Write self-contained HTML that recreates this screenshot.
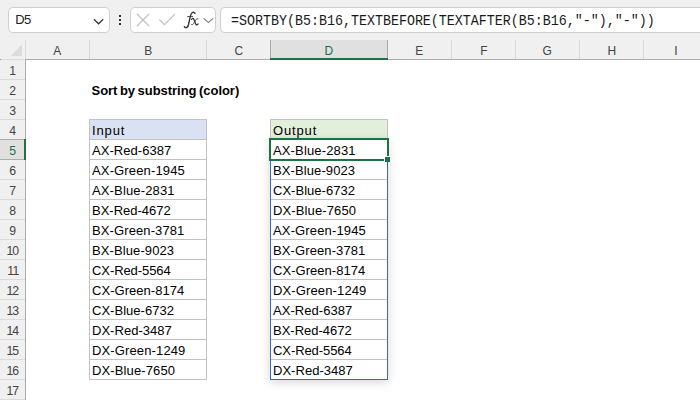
<!DOCTYPE html>
<html><head><meta charset="utf-8">
<style>
*{box-sizing:border-box;margin:0;padding:0}
html,body{width:700px;height:400px;overflow:hidden;background:#f0f0f0;font-family:"Liberation Sans",sans-serif;}
.abs{position:absolute}
.box{position:absolute;top:7px;height:26px;background:#fff;border:1px solid #cecece;border-radius:4.5px}
#sheet{position:absolute;left:26px;top:60px;width:674px;height:340px;background:#fff}
.ch{position:absolute;top:40px;height:19px;font-size:13px;line-height:21px;text-align:center;color:#444;border-right:1px solid #d8d8d8}
.rh{position:absolute;left:0;width:25px;height:20px;font-size:13px;line-height:21px;text-align:center;color:#444;border-bottom:1px solid #dadada}
.cell{position:absolute;height:20px;font-size:13px;line-height:22px;color:#000;white-space:nowrap}
.sq{display:inline-block;transform:scaleX(0.94)}
.hl{position:absolute;height:1px;background:#c2c2c2}
.vl{position:absolute;width:1px;background:#c2c2c2}
</style></head><body>
<!-- formula bar -->
<div class="box" style="left:8px;width:102px"></div>
<div class="abs" style="left:15.3px;top:12.3px;font-size:13px;letter-spacing:-0.6px;line-height:16px;color:#222">D5</div>
<svg class="abs" style="left:92px;top:16px" width="14" height="10" viewBox="0 0 14 10"><path d="M1.9 3.2 L6.55 7.8 L11.2 3.2" fill="none" stroke="#333" stroke-width="1.2"/></svg>
<div class="abs" style="left:119px;top:15px;width:2px;height:2px;background:#333"></div>
<div class="abs" style="left:119px;top:19px;width:2px;height:2px;background:#333"></div>
<div class="abs" style="left:119px;top:23px;width:2px;height:2px;background:#333"></div>
<div class="box" style="left:130px;width:86px"></div>
<svg class="abs" style="left:130px;top:7px" width="86" height="26" viewBox="0 0 86 26">
<path d="M7 7 L19 19 M19 7 L7 19" stroke="#c0c0c0" stroke-width="1.2" fill="none"/>
<path d="M29.2 12.4 L34.4 17.6 L44.9 7.1" stroke="#c0c0c0" stroke-width="1.2" fill="none"/>
<path d="M73.7 11.3 L78.4 15.6 L83.1 11.3" stroke="#777" stroke-width="1.1" fill="none"/>
</svg>
<svg class="abs" style="left:178px;top:6px" width="40" height="28" viewBox="178 6 40 28">
<path d="M194.9 13.3 C194.7 12.3 193.2 11.9 192.1 12.7 C191 13.5 190.6 15 190.2 16.8 L188.4 25 C188 26.7 187 27.7 185.7 27.6 C184.9 27.5 184.6 27.2 184.4 26.7" fill="none" stroke="#333" stroke-width="1.4" stroke-linecap="round"/>
<path d="M187.2 16.6 L193.1 16.6" fill="none" stroke="#333" stroke-width="0.9"/>
<path d="M191.6 19.4 C192.3 18.3 193.4 18.1 193.9 19.4 L195.7 24 C196.2 25.2 197.3 25.1 198.1 23.9" fill="none" stroke="#333" stroke-width="1.25" stroke-linecap="round"/>
<path d="M198.2 19 C197.4 18.3 196.5 18.8 195.8 19.9 L193.5 23.6 C192.9 24.6 192.2 25 191.6 24.6" fill="none" stroke="#333" stroke-width="0.85" stroke-linecap="round"/>
</svg>
<div class="box" style="left:220px;width:500px"></div>
<div class="abs" style="left:231px;top:12px;font-family:'Liberation Mono',monospace;font-size:14.4px;transform:scaleX(0.92577);transform-origin:0 0;line-height:18px;color:#1a1a1a;white-space:pre">=SORTBY(B5:B16,TEXTBEFORE(TEXTAFTER(B5:B16,"-"),"-"))</div>

<!-- headers -->
<div class="abs" style="left:0;top:59px;width:25px;height:1px;background:#dcdcdc"></div>
<div class="abs" style="left:0;top:59px;width:1px;height:1px;background:#999"></div>
<div class="abs" style="left:26px;top:59px;width:674px;height:1px;background:#ababab"></div>
<div class="abs" style="left:25px;top:40px;width:1px;height:20px;background:#dcdcdc"></div>
<div class="abs" style="left:25px;top:59px;width:1px;height:341px;background:#ababab"></div>
<svg class="abs" style="left:9px;top:44px" width="14" height="13" viewBox="0 0 14 13"><path d="M13 0.5 L13 12 L1.5 12 Z" fill="#dcdcdc"/></svg>
<div class="ch" style="left:26px;width:64px"><span class="sq" style="transform:scaleX(0.92)">A</span></div>
<div class="ch" style="left:90px;width:117px"><span class="sq" style="transform:scaleX(0.92)">B</span></div>
<div class="ch" style="left:207px;width:64px"><span class="sq" style="transform:scaleX(0.92)">C</span></div>
<div class="ch" style="left:270px;width:118px;background:#e0e0e0;color:#1f6e43;border-left:1px solid #ababab;border-right:1px solid #ababab"><span class="sq" style="transform:scaleX(0.92)">D</span></div>
<div class="abs" style="left:270px;top:58px;width:118px;height:2px;background:#1e7145"></div>
<div class="ch" style="left:388px;width:64px"><span class="sq" style="transform:scaleX(0.92)">E</span></div>
<div class="ch" style="left:452px;width:64px"><span class="sq" style="transform:scaleX(0.92)">F</span></div>
<div class="ch" style="left:516px;width:64px"><span class="sq" style="transform:scaleX(0.92)">G</span></div>
<div class="ch" style="left:580px;width:64px"><span class="sq" style="transform:scaleX(0.92)">H</span></div>
<div class="ch" style="left:644px;width:64px"><span class="sq" style="transform:scaleX(0.92)">I</span></div>

<div class="rh" style="top:60px"><span class="sq">1</span></div>
<div class="rh" style="top:80px"><span class="sq">2</span></div>
<div class="rh" style="top:100px"><span class="sq">3</span></div>
<div class="rh" style="top:120px"><span class="sq">4</span></div>
<div class="rh" style="top:140px;background:#e0e0e0;color:#1f6e43;top:139px;height:21px;border-top:1px solid #ababab;border-bottom:1px solid #ababab;line-height:21px"><span class="sq">5</span></div>
<div class="rh" style="top:160px"><span class="sq">6</span></div>
<div class="rh" style="top:180px"><span class="sq">7</span></div>
<div class="rh" style="top:200px"><span class="sq">8</span></div>
<div class="rh" style="top:220px"><span class="sq">9</span></div>
<div class="rh" style="top:240px;letter-spacing:-0.9px"><span class="sq">10</span></div>
<div class="rh" style="top:260px;letter-spacing:-0.9px"><span class="sq">11</span></div>
<div class="rh" style="top:280px;letter-spacing:-0.9px"><span class="sq">12</span></div>
<div class="rh" style="top:300px;letter-spacing:-0.9px"><span class="sq">13</span></div>
<div class="rh" style="top:320px;letter-spacing:-0.9px"><span class="sq">14</span></div>
<div class="rh" style="top:340px;letter-spacing:-0.9px"><span class="sq">15</span></div>
<div class="rh" style="top:360px;letter-spacing:-0.9px"><span class="sq">16</span></div>
<div class="rh" style="top:380px;letter-spacing:-0.9px"><span class="sq">17</span></div>
<div class="abs" style="left:24px;top:139px;width:2px;height:21px;background:#1e7145"></div>
<div id="sheet"></div>
<div class="cell" style="left:91.5px;top:80px;font-weight:bold;word-spacing:-1px;letter-spacing:-0.04px">Sort by substring (color)</div>
<div class="abs" style="left:90px;top:120px;width:116px;height:19px;background:#d9e1f2"></div>
<div class="abs" style="left:271px;top:120px;width:116px;height:19px;background:#e2efda"></div>
<div class="hl" style="left:89px;top:119px;width:118px"></div>
<div class="hl" style="left:270px;top:119px;width:118px"></div>
<div class="hl" style="left:89px;top:139px;width:118px"></div>
<div class="hl" style="left:270px;top:139px;width:118px"></div>
<div class="hl" style="left:89px;top:159px;width:118px"></div>
<div class="hl" style="left:270px;top:159px;width:118px"></div>
<div class="hl" style="left:89px;top:179px;width:118px"></div>
<div class="hl" style="left:270px;top:179px;width:118px"></div>
<div class="hl" style="left:89px;top:199px;width:118px"></div>
<div class="hl" style="left:270px;top:199px;width:118px"></div>
<div class="hl" style="left:89px;top:219px;width:118px"></div>
<div class="hl" style="left:270px;top:219px;width:118px"></div>
<div class="hl" style="left:89px;top:239px;width:118px"></div>
<div class="hl" style="left:270px;top:239px;width:118px"></div>
<div class="hl" style="left:89px;top:259px;width:118px"></div>
<div class="hl" style="left:270px;top:259px;width:118px"></div>
<div class="hl" style="left:89px;top:279px;width:118px"></div>
<div class="hl" style="left:270px;top:279px;width:118px"></div>
<div class="hl" style="left:89px;top:299px;width:118px"></div>
<div class="hl" style="left:270px;top:299px;width:118px"></div>
<div class="hl" style="left:89px;top:319px;width:118px"></div>
<div class="hl" style="left:270px;top:319px;width:118px"></div>
<div class="hl" style="left:89px;top:339px;width:118px"></div>
<div class="hl" style="left:270px;top:339px;width:118px"></div>
<div class="hl" style="left:89px;top:359px;width:118px"></div>
<div class="hl" style="left:270px;top:359px;width:118px"></div>
<div class="hl" style="left:89px;top:379px;width:118px"></div>
<div class="hl" style="left:270px;top:379px;width:118px"></div>
<div class="vl" style="left:89px;top:119px;height:261px"></div>
<div class="vl" style="left:206px;top:119px;height:261px"></div>
<div class="vl" style="left:270px;top:119px;height:261px"></div>
<div class="vl" style="left:387px;top:119px;height:261px"></div>
<div class="cell" style="left:92px;top:120px;letter-spacing:0.852px">Input</div>
<div class="cell" style="left:273px;top:120px;letter-spacing:0.846px">Output</div>
<div class="cell" style="left:92px;top:140px;letter-spacing:0.043px">AX-Red-6387</div>
<div class="cell" style="left:92px;top:160px;letter-spacing:0.145px">AX-Green-1945</div>
<div class="cell" style="left:92px;top:180px;letter-spacing:0.140px">AX-Blue-2831</div>
<div class="cell" style="left:92px;top:200px;letter-spacing:-0.004px">BX-Red-4672</div>
<div class="cell" style="left:92px;top:220px;letter-spacing:0.106px">BX-Green-3781</div>
<div class="cell" style="left:92px;top:240px;letter-spacing:0.098px">BX-Blue-9023</div>
<div class="cell" style="left:92px;top:260px;letter-spacing:-0.083px">CX-Red-5564</div>
<div class="cell" style="left:92px;top:280px;letter-spacing:0.039px">CX-Green-8174</div>
<div class="cell" style="left:92px;top:300px;letter-spacing:0.025px">CX-Blue-6732</div>
<div class="cell" style="left:92px;top:320px;letter-spacing:0.026px">DX-Red-3487</div>
<div class="cell" style="left:92px;top:340px;letter-spacing:0.131px">DX-Green-1249</div>
<div class="cell" style="left:92px;top:360px;letter-spacing:0.125px">DX-Blue-7650</div>
<div class="cell" style="left:273px;top:140px;letter-spacing:0.140px">AX-Blue-2831</div>
<div class="cell" style="left:273px;top:160px;letter-spacing:0.098px">BX-Blue-9023</div>
<div class="cell" style="left:273px;top:180px;letter-spacing:0.025px">CX-Blue-6732</div>
<div class="cell" style="left:273px;top:200px;letter-spacing:0.125px">DX-Blue-7650</div>
<div class="cell" style="left:273px;top:220px;letter-spacing:0.145px">AX-Green-1945</div>
<div class="cell" style="left:273px;top:240px;letter-spacing:0.106px">BX-Green-3781</div>
<div class="cell" style="left:273px;top:260px;letter-spacing:0.039px">CX-Green-8174</div>
<div class="cell" style="left:273px;top:280px;letter-spacing:0.131px">DX-Green-1249</div>
<div class="cell" style="left:273px;top:300px;letter-spacing:0.043px">AX-Red-6387</div>
<div class="cell" style="left:273px;top:320px;letter-spacing:-0.004px">BX-Red-4672</div>
<div class="cell" style="left:273px;top:340px;letter-spacing:-0.083px">CX-Red-5564</div>
<div class="cell" style="left:273px;top:360px;letter-spacing:0.026px">DX-Red-3487</div>
<div class="abs" style="left:270px;top:139px;width:118px;height:241px;border:1px solid #3566cf;box-shadow:0 2px 9px rgba(0,0,0,0.17)"></div>
<div class="abs" style="left:269px;top:138px;width:120px;height:23px;border:2px solid #1e7145"></div>
<div class="abs" style="left:384px;top:156px;width:6px;height:6px;background:#1e7145;border-left:1px solid #fff;border-top:1px solid #fff"></div>
</body></html>
